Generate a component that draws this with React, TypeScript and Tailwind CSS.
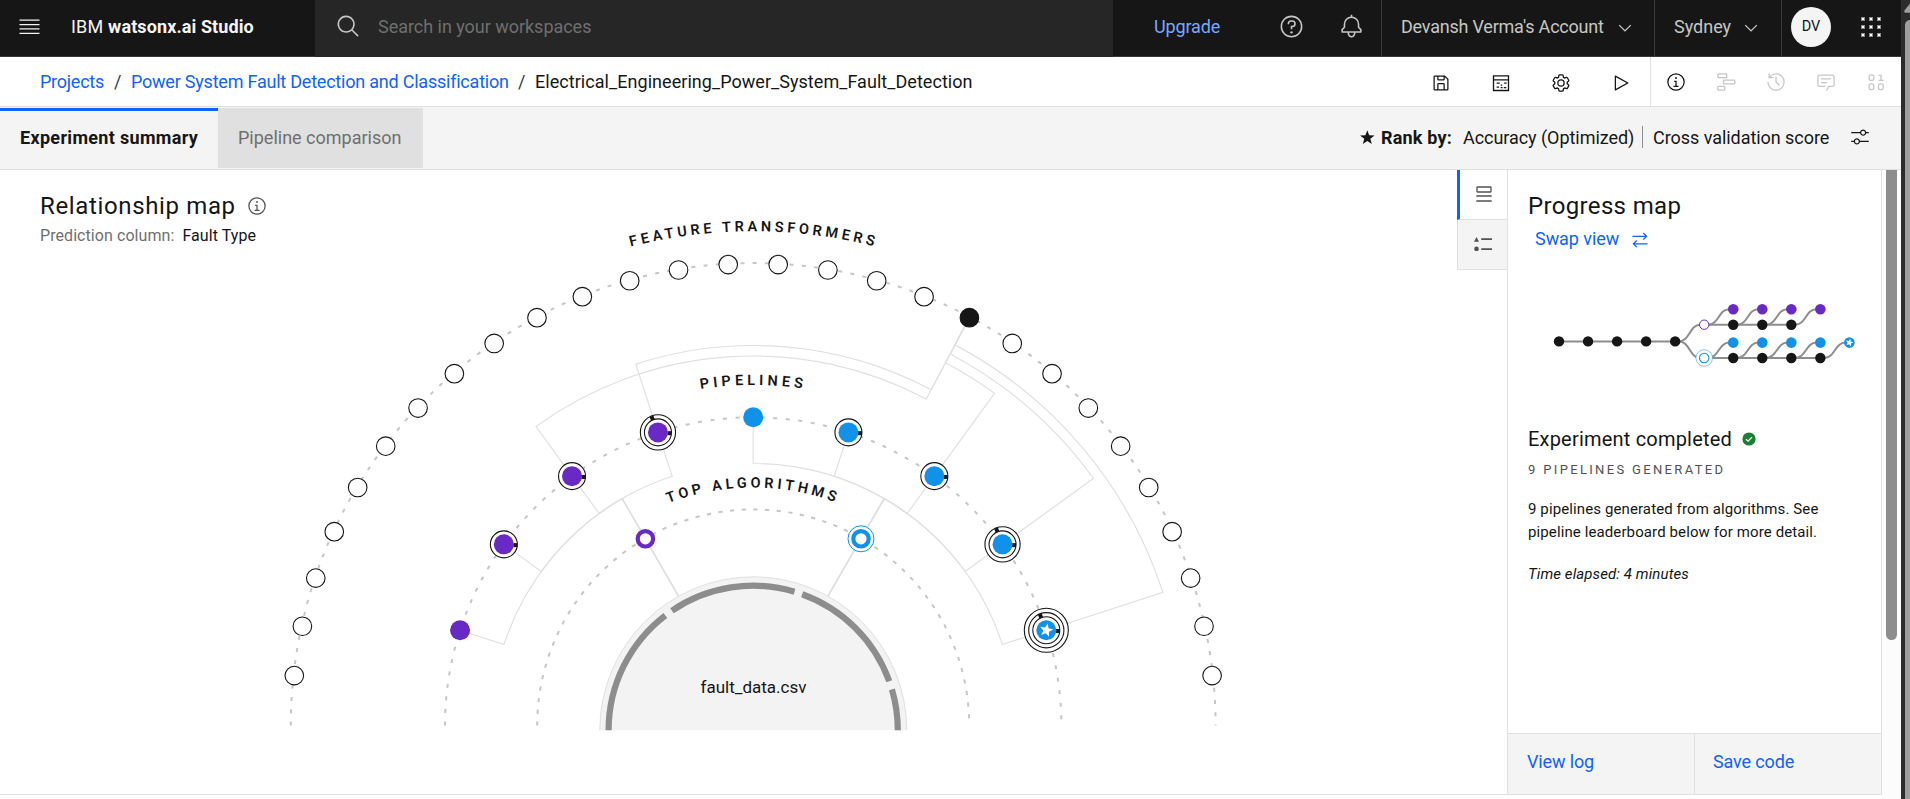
import type { ReactNode } from 'react';

const BLUE = '#1192e8';
const PURPLE = '#6929c4';
const INK = '#161616';
const LINE = '#e0e0e0';

/* ---------- icons ---------- */

function Icon({ d, size = 20, className = '', children }: { d?: string; size?: number; className?: string; children?: ReactNode }) {
  return (
    <svg width={size} height={size} viewBox="0 0 32 32" fill="currentColor" className={`block shrink-0 ${className}`}>
      {d && <path d={d} />}
      {children}
    </svg>
  );
}

const RING = 'M16,2A14,14,0,1,0,30,16,14,14,0,0,0,16,2Zm0,26A12,12,0,1,1,28,16,12,12,0,0,1,16,28Z';
const paths = {
  search: 'M29,27.5859l-7.5521-7.5521a11.0177,11.0177,0,1,0-1.4141,1.4141L27.5859,29ZM4,13a9,9,0,1,1,9,9A9.01,9.01,0,0,1,4,13Z',
  help: `${RING}M17,8H15.5A4.49,4.49,0,0,0,11,12.5V13h2v-.5A2.5,2.5,0,0,1,15.5,10H17a2.5,2.5,0,0,1,0,5H15v4.5h2V17a4.5,4.5,0,0,0,0-9Z`,
  bell: 'M28.7071,19.293,26,16.5859V13a10.0136,10.0136,0,0,0-9-9.9492V1H15V3.0508A10.0136,10.0136,0,0,0,6,13v3.5859L3.2929,19.293A1,1,0,0,0,3,20v3a1,1,0,0,0,1,1h7v.7768a5.152,5.152,0,0,0,4.5,5.1987A5.0057,5.0057,0,0,0,21,25V24h7a1,1,0,0,0,1-1V20A1,1,0,0,0,28.7071,19.293ZM19,25a3,3,0,0,1-6,0V24h6Zm8-3H5V20.4141L7.707,17.707A1,1,0,0,0,8,17V13a8,8,0,0,1,16,0v4a1,1,0,0,0,.293.707L27,20.4141Z',
  chevron: 'M16 22 6 12 7.4 10.6 16 19.2 24.6 10.6 26 12z',
  save: 'M27.71,9.29l-5-5A1,1,0,0,0,22,4H6A2,2,0,0,0,4,6V26a2,2,0,0,0,2,2H26a2,2,0,0,0,2-2V10A1,1,0,0,0,27.71,9.29ZM12,6h8v4H12Zm8,20H12V18h8Zm2,0V18a2,2,0,0,0-2-2H12a2,2,0,0,0-2,2v8H6V6h4v4a2,2,0,0,0,2,2h8a2,2,0,0,0,2-2V6.41l4,4V26Z',
  gear: 'M27,16.76c0-.25,0-.5,0-.76s0-.51,0-.77l1.92-1.68A2,2,0,0,0,29.3,11L26.94,7a2,2,0,0,0-1.73-1,2,2,0,0,0-.64.1l-2.43.82a11.35,11.35,0,0,0-1.31-.75l-.51-2.52a2,2,0,0,0-2-1.61H13.64a2,2,0,0,0-2,1.61l-.51,2.52a11.48,11.48,0,0,0-1.32.75L7.43,6.06A2,2,0,0,0,6.79,6,2,2,0,0,0,5.06,7L2.7,11a2,2,0,0,0,.41,2.51L5,15.24c0,.25,0,.5,0,.76s0,.51,0,.77L3.11,18.45A2,2,0,0,0,2.7,21L5.06,25a2,2,0,0,0,1.73,1,2,2,0,0,0,.64-.1l2.43-.82a11.35,11.35,0,0,0,1.31.75l.51,2.52a2,2,0,0,0,2,1.61h4.72a2,2,0,0,0,2-1.61l.51-2.52a11.48,11.48,0,0,0,1.32-.75l2.42.82a2,2,0,0,0,.64.1,2,2,0,0,0,1.73-1L29.3,21a2,2,0,0,0-.41-2.51ZM25.21,24l-3.43-1.16a8.86,8.86,0,0,1-2.71,1.57L18.36,28H13.64l-.71-3.55a9.36,9.36,0,0,1-2.7-1.57L6.79,24,4.43,20l2.72-2.4a8.9,8.9,0,0,1,0-3.13L4.43,12,6.79,8l3.43,1.16a8.86,8.86,0,0,1,2.71-1.57L13.64,4h4.72l.71,3.55a9.36,9.36,0,0,1,2.7,1.57L25.21,8,27.57,12l-2.72,2.4a8.9,8.9,0,0,1,0,3.13L27.57,20ZM16,22a6,6,0,1,1,6-6A5.94,5.94,0,0,1,16,22Zm0-10a3.91,3.91,0,0,0-4,4,3.91,3.91,0,0,0,4,4,3.91,3.91,0,0,0,4-4A3.91,3.91,0,0,0,16,12Z',
  play: 'M7,28a1,1,0,0,1-1-1V5a1,1,0,0,1,1.4819-.8763l20,11a1,1,0,0,1,0,1.7525l-20,11A1.0005,1.0005,0,0,1,7,28ZM8,6.6909V25.3088L24.9248,16Z',
  info: `${RING}M17 22 17 14 13 14 13 16 15 16 15 22 12 22 12 24 20 24 20 22 17 22zM16,8a1.5,1.5,0,1,0,1.5,1.5A1.5,1.5,0,0,0,16,8Z`,
  history: 'M20.59 22 15 16.41 15 7 17 7 17 15.58 22 20.59 20.59 22zM16,2A13.94,13.94,0,0,0,6,6.23V2H4v8h8V8H7.08A12,12,0,1,1,4,16H2A14,14,0,1,0,16,2Z',
  chat: 'M17.74,30,16,29l4-7h6a2,2,0,0,0,2-2V8a2,2,0,0,0-2-2H6A2,2,0,0,0,4,8V20a2,2,0,0,0,2,2h9v2H6a4,4,0,0,1-4-4V8A4,4,0,0,1,6,4H26a4,4,0,0,1,4,4V20a4,4,0,0,1-4,4H21.16ZM8 10H24V12H8zM8 16H18V18H8z',
  adjust: 'M30,8h-4.1c-0.5-2.3-2.5-4-4.9-4s-4.4,1.7-4.9,4H2v2h14.1c0.5,2.3,2.5,4,4.9,4s4.4-1.7,4.9-4H30V8z M21,12c-1.7,0-3-1.3-3-3s1.3-3,3-3s3,1.3,3,3S22.7,12,21,12z M2,24h4.1c0.5,2.3,2.5,4,4.9,4s4.4-1.7,4.9-4H30v-2H15.9c-0.5-2.3-2.5-4-4.9-4s-4.4,1.7-4.9,4H2V24z M11,20c1.7,0,3,1.3,3,3s-1.3,3-3,3s-3-1.3-3-3S9.3,20,11,20z',
  swap: 'M11.41 26.59 7.83 23 28 23 28 21 7.83 21 11.41 17.41 10 16 4 22 10 28 11.41 26.59zM28 10 22 4 20.59 5.41 24.17 9 4 9 4 11 24.17 11 20.59 14.59 22 16 28 10z',
};

function starPoints(cx: number, cy: number, r: number) {
  return Array.from({ length: 10 }, (_, i) => {
    const rad = i % 2 ? r * 0.42 : r;
    const a = (i * Math.PI) / 5;
    return `${(cx + rad * Math.sin(a)).toFixed(2)},${(cy - rad * Math.cos(a)).toFixed(2)}`;
  }).join(' ');
}

/* ---------- relationship map ---------- */

const CX = 753.2;
const CY = 725.5;
const R = { feature: 462, pipeline: 308.2, algorithm: 215.6, inner: 262, disc: 150 };

// Angles are in degrees clockwise from twelve o'clock.
function at(r: number, deg: number): [number, number] {
  const a = (deg * Math.PI) / 180;
  return [CX + r * Math.sin(a), CY - r * Math.cos(a)];
}
const pt = (r: number, deg: number, dy = 0) => {
  const [x, y] = at(r, deg);
  return `${x.toFixed(2)} ${(y + dy).toFixed(2)}`;
};
const arc = (r: number, from: number, to: number, dy = 0) =>
  `A${r} ${r} 0 0 ${to > from ? 1 : 0} ${pt(r, to, dy)}`;
const half = (r: number) => `M${pt(r, -90)}${arc(r, -90, 0)}${arc(r, 0, 90)}`;

const pipelines = [
  { deg: -72, rings: 0, color: PURPLE, alg: -30 },
  { deg: -54, rings: 1, color: PURPLE, alg: -30 },
  { deg: -36, rings: 1, color: PURPLE, alg: -30, outer: 369.5 },
  { deg: -18, rings: 2, color: PURPLE, alg: -30, outer: 380 },
  { deg: 0, rings: 0, color: BLUE, alg: 30 },
  { deg: 18, rings: 1, color: BLUE, alg: 30 },
  { deg: 36, rings: 1, color: BLUE, alg: 30, outer: 410.6 },
  { deg: 54, rings: 2, color: BLUE, alg: 30, outer: 420.6 },
  { deg: 72, rings: 3, color: BLUE, alg: 30, outer: 430.8, star: true },
];
const FEATURE_STEP = 180 / 29;
const ACTIVE = 4.5 * FEATURE_STEP;
const ringRadii = [13.5, 17.6, 22];
const segments = [[-90, -37.4], [-34.2, 16.6], [19.8, 70.2], [73.6, 90]];

function CurvedLabel({ id, r, length, shift, children }: { id: string; r: number; length: number; shift: number; children: string }) {
  return (
    <>
      <path id={id} d={half(r)} fill="none" />
      <text fill={INK} fontSize="14.5" fontWeight="600" textAnchor="middle" textLength={length} lengthAdjust="spacing">
        <textPath href={`#${id}`} startOffset={(Math.PI * r) / 2 + shift} textLength={length} lengthAdjust="spacing">{children}</textPath>
      </text>
    </>
  );
}

function RelationshipMap() {
  return (
    <svg width="1457" height="624" viewBox="0 170 1457 624" className="col-start-1 row-start-1 block">
      <g fill="none" stroke="#c6c6c6" strokeWidth="2">
        <path d={half(R.feature + 0.4)} strokeDasharray="4 8.3" />
        <path d={half(R.pipeline)} strokeDasharray="4 8.6" />
        <path d={half(R.algorithm + 0.4)} strokeDasharray="4.2 7.5" />
      </g>

      <g fill="none" stroke={LINE} strokeWidth="1.15">
        {pipelines.map((p) => (
          <path key={p.deg} d={`M${pt(R.pipeline, p.deg)}L${pt(R.inner, p.deg)}${arc(R.inner, p.deg, p.alg)}L${pt(R.disc, p.alg)}`} />
        ))}
        {pipelines.map((p) =>
          p.outer ? (
            <path key={p.deg} d={`M${pt(R.pipeline, p.deg)}L${pt(p.outer, p.deg)}${arc(p.outer, p.deg, ACTIVE)}L${pt(R.feature, ACTIVE)}`} />
          ) : null,
        )}
      </g>

      {Array.from({ length: 28 }, (_, i) => {
        const deg = (i + 1) * FEATURE_STEP - 90;
        const [x, y] = at(461.6, deg);
        return <circle key={i} cx={x} cy={y} r="9.3" fill={i === 18 ? INK : '#fff'} stroke={INK} strokeWidth="1.1" />;
      })}

      {pipelines.map((p) => {
        const [x, y] = at(R.pipeline, p.deg);
        return (
          <g key={p.deg} transform={`translate(${x} ${y})`}>
            {ringRadii.slice(0, p.rings).reverse().map((r) => (
              <circle key={r} r={r} fill="#fff" stroke={INK} strokeWidth="1.1" />
            ))}
            {p.rings > 0 && <rect x="9.5" y="-1.2" width="4" height="4" fill={INK} />}
            {p.rings > 1 && <rect x="-2" y="-17.5" width="4" height="4.2" fill={INK} transform="rotate(-22)" />}
            <circle r="10" fill={p.color} />
            {p.star && <polygon points={starPoints(0, 0, 7)} fill="#fff" transform="rotate(12)" />}
          </g>
        );
      })}

      {[-30, 30].map((deg) => {
        const [x, y] = at(R.algorithm, deg);
        return (
          <g key={deg} transform={`translate(${x} ${y})`}>
            {deg > 0 && <circle r="13" fill="#fff" stroke={BLUE} strokeWidth="1" />}
            <circle r="7.7" fill="#fff" stroke={deg > 0 ? BLUE : PURPLE} strokeWidth="4.2" />
          </g>
        );
      })}

      <path d="M599.8 730.3A153.5 153.5 0 0 1 906.8 730.3" fill="#f3f3f3" stroke={LINE} strokeWidth="1" />
      <g fill="none" stroke="#8d8d8d" strokeWidth="6.2">
        {segments.map(([a, b]) => (
          <path key={a} d={`M${pt(144.6, a, 4.8)}${arc(144.6, a, b, 4.8)}`} />
        ))}
      </g>
      <text x="753.5" y="693" fontSize="17" fill={INK} textAnchor="middle">fault_data.csv</text>

      <CurvedLabel id="label-features" r={494.3} length={245.5} shift={-1.2}>FEATURE TRANSFORMERS</CurvedLabel>
      <CurvedLabel id="label-pipelines" r={340.6} length={102.5} shift={-2}>PIPELINES</CurvedLabel>
      <CurvedLabel id="label-algorithms" r={238} length={170} shift={-2}>TOP ALGORITHMS</CurvedLabel>
    </svg>
  );
}

/* ---------- progress map ---------- */

function ProgressMap() {
  const x = (i: number) => 30 + i * 29.04;
  const rise = (i: number, y1: number, y2: number) => {
    const a = x(i) + 4;
    const b = x(i + 1) - 4;
    const m = (a + b) / 2;
    return `M${a} ${y1}C${m} ${y1} ${m} ${y2} ${b} ${y2}`;
  };
  return (
    <svg width="340" height="80" viewBox="0 0 340 80" className="block">
      <g fill="none" stroke="#8d8d8d" strokeWidth="2">
        <path d={`M${x(0)} 41.4H${x(4)}M${x(5)} 24.7H${x(8)}M${x(5)} 58H${x(9)}`} />
        <path d={rise(4, 41.4, 24.7)} />
        <path d={rise(4, 41.4, 58)} />
        {[5, 6, 7, 8].map((i) => <path key={i} d={rise(i, 24.7, 9.2)} />)}
        {[5, 6, 7, 8, 9].map((i) => <path key={i} d={rise(i, 58, 42.6)} />)}
      </g>
      {[0, 1, 2, 3, 4].map((i) => <circle key={i} cx={x(i)} cy="41.4" r="5.2" fill={INK} />)}
      {[6, 7, 8].map((i) => <circle key={i} cx={x(i)} cy="24.7" r="5.2" fill={INK} />)}
      {[6, 7, 8, 9].map((i) => <circle key={i} cx={x(i)} cy="58" r="5.2" fill={INK} />)}
      {[6, 7, 8, 9].map((i) => <circle key={i} cx={x(i)} cy="9.2" r="5.3" fill={PURPLE} />)}
      {[6, 7, 8, 9, 10].map((i) => <circle key={i} cx={x(i)} cy="42.6" r="5.3" fill={BLUE} />)}
      <polygon points={starPoints(x(10), 42.6, 4.1)} fill="#fff" transform={`rotate(12 ${x(10)} 42.6)`} />
      <circle cx={x(5)} cy="24.7" r="4.7" fill="#fff" stroke={PURPLE} strokeWidth="1" />
      <circle cx={x(5)} cy="58" r="8.3" fill="#fff" stroke={BLUE} strokeWidth="0.5" />
      <circle cx={x(5)} cy="58" r="4.7" fill="#fff" stroke={BLUE} strokeWidth="1.1" />
    </svg>
  );
}

/* ---------- page chrome ---------- */

function Header() {
  return (
    <header className="flex h-[57px] shrink-0 items-stretch bg-[#161616] text-[18px] text-[#c6c6c6]">
      <div className="flex w-[315px] items-center border-b border-[#393939] pb-1 text-[#f4f4f4]">
        <svg width="21" height="16" viewBox="0 0 21 16" className="ml-[19px] mt-[1px] block" fill="currentColor">
          <path d="M.5 .5h20v1.3H.5zM.5 4.9h20v1.3H.5zM.5 9.3h20v1.3H.5zM.5 13.7h20v1.3H.5z" />
        </svg>
        <span className="ml-[31px] whitespace-pre tracking-[0.2px]">IBM <b className="tracking-[0.1px]">watsonx.ai Studio</b></span>
      </div>
      <div className="flex w-[798px] items-center bg-[#262626] pb-1">
        <Icon d={paths.search} size={25} className="ml-[21px]" />
        <span className="ml-[17px] tracking-[-0.03px] text-[#6f6f6f]">Search in your workspaces</span>
      </div>
      <div className="flex w-[268px] items-center border-b border-[#393939] pb-1">
        <span className="ml-[41px] w-[67px] tracking-[-0.15px] text-[#78a9ff]">Upgrade</span>
        <Icon d={paths.help} size={25} className="ml-[58px]"><circle cx="16" cy="23.5" r="1.5" /></Icon>
        <Icon d={paths.bell} size={25} className="ml-[35px]" />
      </div>
      <div className="flex w-[273px] items-center border-b border-l border-[#393939] pb-[3px]">
        <span className="ml-[19px] w-[214px] tracking-[-0.22px]">Devansh Verma's Account</span>
        <Icon d={paths.chevron} className="mt-[3px]" />
      </div>
      <div className="flex w-[127px] items-center border-b border-l border-[#393939] pb-[3px]">
        <span className="ml-[19px] w-[67px]">Sydney</span>
        <Icon d={paths.chevron} className="mt-[3px]" />
      </div>
      <div className="flex flex-1 items-center border-b border-l border-[#393939] pb-[3px]">
        <span className="ml-[9px] flex size-10 items-center justify-center rounded-full bg-[#f4f4f4] text-[14.5px] text-[#161616]">DV</span>
        <div className="ml-[30px] grid grid-cols-3 gap-1">
          {Array.from({ length: 9 }, (_, i) => <i key={i} className="block size-1 border border-[#8d8d8d] bg-white" />)}
        </div>
      </div>
    </header>
  );
}

function Toolbar() {
  return (
    <div className="flex h-[50px] shrink-0 items-center border-b border-[#e0e0e0] bg-white text-[18px] text-[#161616]">
      <nav className="flex flex-1 items-center whitespace-nowrap pl-10">
        <span className="w-[74px] tracking-[-0.25px] text-[#0f62fe]">Projects</span>
        <span className="w-[17px] text-[#393939]">/</span>
        <span className="w-[387px] tracking-[-0.22px] text-[#0f62fe]">Power System Fault Detection and Classification</span>
        <span className="w-[17px] text-[#393939]">/</span>
        <span className="tracking-[0.05px]">Electrical_Engineering_Power_System_Fault_Detection</span>
      </nav>
      <div className="flex items-center gap-10 pr-[19px] pt-[2px]">
        <Icon d={paths.save} />
        <Icon>
          <path d="M4 4.5H28V28H4zM4 11H28" fill="none" stroke="currentColor" strokeWidth="2.1" />
          <path d="M9 15h5v2H9zM21 15h4v2h-4zM15.5 18.5h2.5v2h-2.5zM9 21.500h4v2H9zM15.500 22.500h3v2h-3zM20.500 22.500h4v2h-4z" />
        </Icon>
        <Icon d={paths.gear} />
        <Icon d={paths.play} />
      </div>
      <div className="flex h-full items-center gap-[30px] border-l border-[#e0e0e0] pl-[15px] pr-[15px] text-[#c6c6c6]">
        <Icon d={paths.info} className="text-[#161616]" />
        <Icon>
          <g fill="none" stroke="currentColor" strokeWidth="2.2">
            <rect x="3" y="3" width="14" height="6" rx="1" />
            <rect x="12" y="13" width="18" height="6" rx="1" />
            <rect x="3" y="23" width="11" height="6" rx="1" />
          </g>
        </Icon>
        <Icon d={paths.history} />
        <Icon d={paths.chat} />
        <Icon>
          <g fill="none" stroke="currentColor" strokeWidth="2">
            <rect x="5" y="4.500" width="7.500" height="9" rx="3" />
            <rect x="5" y="19" width="7.500" height="9" rx="3" />
            <rect x="20" y="19" width="7.500" height="9" rx="3" />
            <path d="M20 5.500H24V13.500M20 13.500H28" />
          </g>
        </Icon>
      </div>
    </div>
  );
}

function TabBar() {
  return (
    <div className="flex h-[63px] shrink-0 items-stretch border-b border-[#e0e0e0] bg-[#f4f4f4] pt-px text-[18px] text-[#161616]">
      <div className="flex h-[60px] w-[218px] items-center border-t-[3px] border-[#0f62fe] pb-[4px] pl-[20px] font-bold tracking-[0.32px]">Experiment summary</div>
      <div className="flex h-[60px] w-[205px] items-center bg-[#e0e0e0] pb-[2px] pl-5 text-[#6f6f6f]">Pipeline comparison</div>
      <div className="flex h-[60px] flex-1 items-center justify-end whitespace-nowrap pb-[2px] pr-[31px]">
        <svg width="15" height="15" viewBox="0 0 15 15" className="mr-[6px] block"><polygon points={starPoints(7.3, 7.8, 7.6)} fill={INK} /></svg>
        <b className="w-[82px] tracking-[0.2px]">Rank by:</b>
        <span className="w-[179px] tracking-[-0.05px]">Accuracy (Optimized)</span>
        <span className="mr-[10px] h-[22px] w-px bg-[#8d8d8d]" />
        <span className="w-[197px] tracking-[-0.05px]">Cross validation score</span>
        <Icon d={paths.adjust} />
      </div>
    </div>
  );
}

function ViewToggle() {
  return (
    <div className="flex w-[50px] shrink-0 flex-col text-[#525252]">
      <div className="flex h-[50px] items-center justify-center border-b border-l-[3px] border-b-[#e0e0e0] border-l-[#0f62fe]">
        <svg width="16" height="16" viewBox="0 0 16 16" className="-mt-px block" fill="none" stroke="currentColor" strokeWidth="1.3">
          <rect x="1" y="1" width="14" height="5" rx="0.5" />
          <path d="M.3 10H15.700M.3 15H15.700" />
        </svg>
      </div>
      <div className="flex h-[50px] items-center justify-center border-b border-l border-[#e0e0e0] bg-[#f4f4f4] pb-[2px]">
        <svg width="18" height="14" viewBox="0 0 18 14" className="block" fill="currentColor">
          <path d="M2.500 0L5 4.800H0zM7.200 1.200H18V3H7.200zM7.200 11.200H18V13H7.200z" />
          <circle cx="2.500" cy="11.900" r="2.300" />
        </svg>
      </div>
    </div>
  );
}

function ProgressPanel() {
  return (
    <aside className="flex w-[375px] shrink-0 flex-col border-x border-[#e0e0e0] text-[#161616]">
      <div className="flex-1 pl-5">
        <h2 className="mt-5 text-[24px] leading-8 tracking-[0.34px]">Progress map</h2>
        <a className="mt-[5px] flex items-center pl-[7px] text-[18px] leading-6 tracking-[-0.05px] text-[#0f62fe]">
          Swap view <Icon d={paths.swap} className="ml-[11px] mt-[2px]" />
        </a>
        <div className="mt-[49px] pl-px"><ProgressMap /></div>
        <h3 className="mt-[47px] flex items-center text-[20px] leading-6 tracking-[0.2px]">
          Experiment completed
          <svg width="14" height="14" viewBox="0 0 14 14" className="ml-[10px] block">
            <circle cx="7" cy="7" r="6.600" fill="#198038" />
            <path d="M4 7.200l2.100 2L10 5.200" fill="none" stroke="#fff" strokeWidth="1.200" />
          </svg>
        </h3>
        <p className="mt-[9px] text-[13px] leading-5 tracking-[2.34px] text-[#525252]">9 PIPELINES GENERATED</p>
        <p className="mt-[18px] text-[15px] leading-[23px] tracking-[0.11px]">
          9 pipelines generated from algorithms. See<br />pipeline leaderboard below for more detail.
        </p>
        <p className="mt-[19px] text-[15px] leading-[23px] italic tracking-[0.1px]">Time elapsed: 4 minutes</p>
      </div>
      <div className="flex h-[61px] border-t border-[#e0e0e0] bg-[#f4f4f4] pb-[2px] text-[18px] tracking-[-0.14px] text-[#0f62fe]">
        <a className="-mb-[2px] flex w-[187px] items-center border-r border-[#e0e0e0] pb-[5px] pl-[19px]">View log</a>
        <a className="-mb-[2px] flex flex-1 items-center pb-[5px] pl-[18px]">Save code</a>
      </div>
    </aside>
  );
}

export default function App() {
  return (
    <div className="flex h-[799px] w-[1910px] overflow-hidden bg-white font-[Roboto,'Liberation_Sans',sans-serif]">
      <div className="flex w-[1901px] flex-col">
        <Header />
        <Toolbar />
        <TabBar />
        <div className="flex flex-1">
          <main className="flex h-[625px] shrink-0 border-b border-[#e0e0e0]">
            <section className="grid w-[1457px] shrink-0">
              <div className="col-start-1 row-start-1 pl-10 pt-5 text-[#161616]">
                <h1 className="flex items-center text-[24px] leading-8 tracking-[0.64px]">
                  Relationship map <Icon d={paths.info} className="-mt-px ml-[11px] text-[#525252]" />
                </h1>
                <p className="mt-[2px] text-[16px] leading-6 tracking-[0.07px] text-[#6f6f6f]">
                  Prediction column: <span className="ml-1 text-[#161616]">Fault Type</span>
                </p>
              </div>
              <RelationshipMap />
            </section>
            <ViewToggle />
            <ProgressPanel />
          </main>
          <div className="flex flex-1 justify-center bg-[#fcfcfc]">
            <div className="h-[470px] w-[11px] rounded-b-full bg-[#8d8d8d]" />
          </div>
        </div>
      </div>
      <div className="flex w-[9px] flex-col bg-[#2c2c2c]">
        <svg width="9" height="20" viewBox="0 0 9 20" className="block">
          <path d="M9 3.500L3.500 10.500Q2.800 12.800 5 12.800H9z" fill="#9f9f9f" />
        </svg>
        <div className="ml-1 flex-1 rounded-tl-[5px] bg-[#9f9f9f]" />
      </div>
    </div>
  );
}
